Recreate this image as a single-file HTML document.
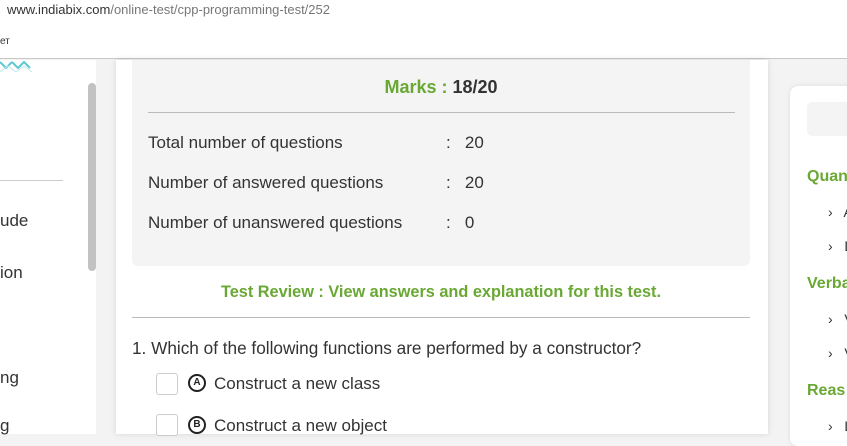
<!DOCTYPE html>
<html><head><style>
*{margin:0;padding:0;box-sizing:border-box}
body{width:847px;height:434px;overflow:hidden;background:#f3f3f3;font-family:"Liberation Sans",Arial,sans-serif;position:relative;color:#333}
.a{position:absolute;white-space:nowrap}
.g{color:#6aa834;font-weight:bold}
.c{position:absolute;width:18px;height:18px;border:2px solid #222;border-radius:50%;font-size:10px;font-weight:bold;text-align:center;line-height:14px;color:#222}
</style></head><body>
<div class="a" style="left:0;top:0;width:847px;height:59px;background:#fff;border-bottom:1px solid #c8c8c8"></div>
<div class="a" style="left:7px;top:2px;font-size:13px;color:#777"><span style="color:#333">www.indiabix.com</span>/online-test/cpp-programming-test/252</div>
<div class="a" style="left:0;top:36px;font-size:10px;color:#333">ет</div>
<div class="a" style="left:0;top:60px;width:96px;height:374px;background:#fff"></div>
<svg class="a" style="left:0;top:60px" width="34" height="16"><path d="M0 2 L6 8 L12 2 M12 2 L18 8 L24 2 L30 8" stroke="#5cc8d0" stroke-width="2" fill="none"/><path d="M0 12 L8 6 L16 12 L24 6 L32 12" stroke="#bfe8ec" stroke-width="1" fill="none"/></svg>
<div class="a" style="left:88px;top:83px;width:8px;height:188px;background:#c2c2c2;border-radius:4px"></div>
<div class="a" style="left:0;top:180px;width:63px;height:1px;background:#ccc"></div>
<div class="a" style="left:0;top:211px;font-size:17px">ude</div>
<div class="a" style="left:0;top:263px;font-size:17px">ion</div>
<div class="a" style="left:0;top:368px;font-size:17px">ng</div>
<div class="a" style="left:0;top:416px;font-size:17px">g</div>
<div class="a" style="left:116px;top:60px;width:652px;height:374px;background:#fff;box-shadow:0 0 6px rgba(0,0,0,.12)"></div>
<div class="a" style="left:132px;top:60px;width:618px;height:206px;background:#f4f4f4;border-radius:0 0 6px 6px"></div>
<div class="a g" style="left:132px;top:77px;width:618px;text-align:center;font-size:18px">Marks : <span style="color:#333">18/20</span></div>
<div class="a" style="left:148px;top:112px;width:587px;height:1px;background:#bbb"></div>
<div class="a" style="left:148px;top:133px;font-size:17px">Total number of questions</div>
<div class="a" style="left:148px;top:173px;font-size:17px">Number of answered questions</div>
<div class="a" style="left:148px;top:213px;font-size:17px">Number of unanswered questions</div>
<div class="a" style="left:446px;top:133px;font-size:17px">:&nbsp;&nbsp; 20</div>
<div class="a" style="left:446px;top:173px;font-size:17px">:&nbsp;&nbsp; 20</div>
<div class="a" style="left:446px;top:213px;font-size:17px">:&nbsp;&nbsp; 0</div>
<div class="a g" style="left:132px;top:283px;width:618px;text-align:center;font-size:16.3px">Test Review : View answers and explanation for this test.</div>
<div class="a" style="left:132px;top:317px;width:618px;height:1px;background:#bbb"></div>
<div class="a" style="left:132px;top:338px;font-size:17.2px">1. Which of the following functions are performed by a constructor?</div>
<div class="a" style="left:156px;top:373px;width:22px;height:22px;border:1px solid #ccc;border-radius:3px;background:#fff"></div>
<div class="c" style="left:188px;top:374px">A</div>
<div class="a" style="left:214px;top:374px;font-size:17px">Construct a new class</div>
<div class="a" style="left:156px;top:414px;width:22px;height:22px;border:1px solid #ccc;border-radius:3px;background:#fff"></div>
<div class="c" style="left:188px;top:416px">B</div>
<div class="a" style="left:214px;top:416px;font-size:17px">Construct a new object</div>
<div class="a" style="left:790px;top:86px;width:70px;height:360px;background:#fff;border-radius:8px;box-shadow:0 0 5px rgba(0,0,0,.1)"></div>
<div class="a" style="left:807px;top:102px;width:50px;height:34px;background:#f4f4f4;border-radius:5px"></div>
<div class="a g" style="left:807px;top:168px;font-size:16px">Quan</div>
<div class="a" style="left:828px;top:204px;font-size:14px">›&nbsp;&nbsp; A</div>
<div class="a" style="left:828px;top:238px;font-size:14px">›&nbsp;&nbsp; D</div>
<div class="a g" style="left:807px;top:275px;font-size:16px">Verba</div>
<div class="a" style="left:828px;top:311px;font-size:14px">›&nbsp;&nbsp; V</div>
<div class="a" style="left:828px;top:345px;font-size:14px">›&nbsp;&nbsp; V</div>
<div class="a g" style="left:807px;top:382px;font-size:16px">Reas</div>
<div class="a" style="left:828px;top:418px;font-size:14px">›&nbsp;&nbsp; L</div>
</body></html>
